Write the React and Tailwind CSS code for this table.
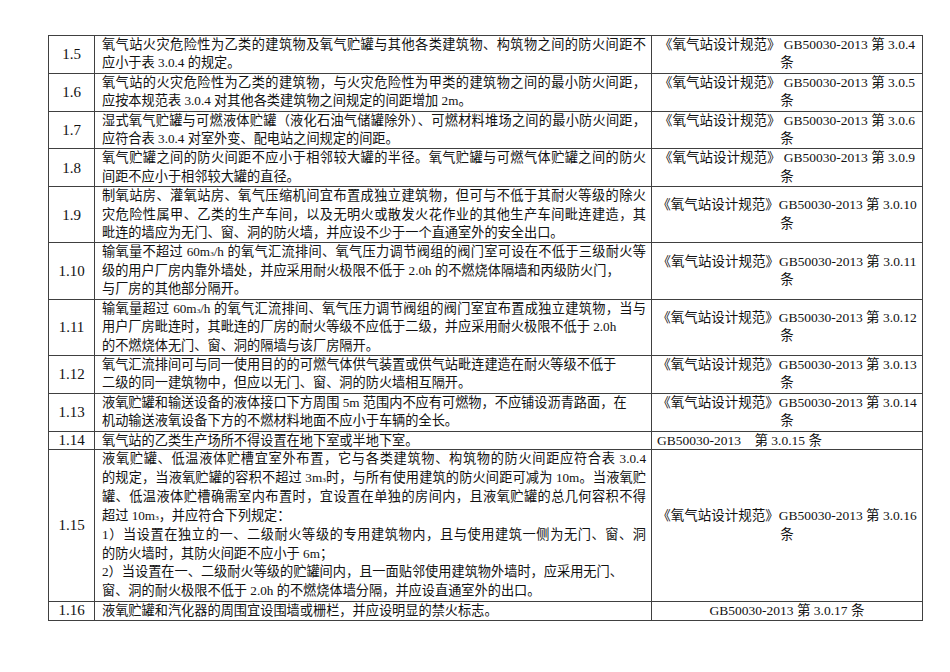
import React from 'react';

// each line: [text, justify]
const rows = [
  {
    n: '1.5',
    lines: [
      ['氧气站火灾危险性为乙类的建筑物及氧气贮罐与其他各类建筑物、构筑物之间的防火间距不', true],
      ['应小于表 3.0.4 的规定。', false],
    ],
    ref: ['《氧气站设计规范》 GB50030-2013 第 3.0.4', '条'],
  },
  {
    n: '1.6',
    lines: [
      ['氧气站的火灾危险性为乙类的建筑物，与火灾危险性为甲类的建筑物之间的最小防火间距，', true],
      ['应按本规范表 3.0.4 对其他各类建筑物之间规定的间距增加 2m。', false],
    ],
    ref: ['《氧气站设计规范》 GB50030-2013 第 3.0.5', '条'],
  },
  {
    n: '1.7',
    lines: [
      ['湿式氧气贮罐与可燃液体贮罐（液化石油气储罐除外）、可燃材料堆场之间的最小防火间距，', true],
      ['应符合表 3.0.4 对室外变、配电站之间规定的间距。', false],
    ],
    ref: ['《氧气站设计规范》 GB50030-2013 第 3.0.6', '条'],
  },
  {
    n: '1.8',
    lines: [
      ['氧气贮罐之间的防火间距不应小于相邻较大罐的半径。氧气贮罐与可燃气体贮罐之间的防火', true],
      ['间距不应小于相邻较大罐的直径。', false],
    ],
    ref: ['《氧气站设计规范》 GB50030-2013 第 3.0.9', '条'],
  },
  {
    n: '1.9',
    lines: [
      ['制氧站房、灌氧站房、氧气压缩机间宜布置成独立建筑物，但可与不低于其耐火等级的除火', true],
      ['灾危险性属甲、乙类的生产车间，以及无明火或散发火花作业的其他生产车间毗连建造，其', true],
      ['毗连的墙应为无门、窗、洞的防火墙，并应设不少于一个直通室外的安全出口。', false],
    ],
    ref: ['《氧气站设计规范》GB50030-2013 第 3.0.10', '条'],
  },
  {
    n: '1.10',
    lines: [
      ['输氧量不超过 60m³/h 的氧气汇流排间、氧气压力调节阀组的阀门室可设在不低于三级耐火等', true],
      ['级的用户厂房内靠外墙处，并应采用耐火极限不低于 2.0h 的不燃烧体隔墙和丙级防火门，', false],
      ['与厂房的其他部分隔开。', false],
    ],
    ref: ['《氧气站设计规范》GB50030-2013 第 3.0.11', '条'],
  },
  {
    n: '1.11',
    lines: [
      ['输氧量超过 60m³/h 的氧气汇流排间、氧气压力调节阀组的阀门室宜布置成独立建筑物，当与', true],
      ['用户厂房毗连时，其毗连的厂房的耐火等级不应低于二级，并应采用耐火极限不低于 2.0h', false],
      ['的不燃烧体无门、窗、洞的隔墙与该厂房隔开。', false],
    ],
    ref: ['《氧气站设计规范》GB50030-2013 第 3.0.12', '条'],
  },
  {
    n: '1.12',
    lines: [
      ['氧气汇流排间可与同一使用目的的可燃气体供气装置或供气站毗连建造在耐火等级不低于', false],
      ['二级的同一建筑物中，但应以无门、窗、洞的防火墙相互隔开。', false],
    ],
    ref: ['《氧气站设计规范》GB50030-2013 第 3.0.13', '条'],
  },
  {
    n: '1.13',
    lines: [
      ['液氧贮罐和输送设备的液体接口下方周围 5m 范围内不应有可燃物，不应铺设沥青路面，在', false],
      ['机动输送液氧设备下方的不燃材料地面不应小于车辆的全长。', false],
    ],
    ref: ['《氧气站设计规范》GB50030-2013 第 3.0.14', '条'],
  },
  {
    n: '1.14',
    lines: [['氧气站的乙类生产场所不得设置在地下室或半地下室。', false]],
    ref: ['GB50030-2013\u3000第 3.0.15 条'],
    refLeft: true,
    single: true,
  },
  {
    n: '1.15',
    lines: [
      ['液氧贮罐、低温液体贮槽宜室外布置，它与各类建筑物、构筑物的防火间距应符合表 3.0.4', true],
      ['的规定，当液氧贮罐的容积不超过 3m³时，与所有使用建筑的防火间距可减为 10m。当液氧贮', true],
      ['罐、低温液体贮槽确需室内布置时，宜设置在单独的房间内，且液氧贮罐的总几何容积不得', true],
      ['超过 10m³，并应符合下列规定：', false],
      ['1）当设置在独立的一、二级耐火等级的专用建筑物内，且与使用建筑一侧为无门、窗、洞', true],
      ['的防火墙时，其防火间距不应小于 6m；', false],
      ['2）当设置在一、二级耐火等级的贮罐间内，且一面贴邻使用建筑物外墙时，应采用无门、', false],
      ['窗、洞的耐火极限不低于 2.0h 的不燃烧体墙分隔，并应设直通室外的出口。', false],
    ],
    ref: ['《氧气站设计规范》GB50030-2013 第 3.0.16', '条'],
    tall: true,
  },
  {
    n: '1.16',
    lines: [['液氧贮罐和汽化器的周围宜设围墙或栅栏，并应设明显的禁火标志。', false]],
    ref: ['GB50030-2013 第 3.0.17 条'],
    single: true,
  },
];

// cubic-metre mark: a tiny 3 that must not grow the line box
const renderText = (s) =>
  s.split('³').map((part, i) => (
    <React.Fragment key={i}>
      {i > 0 && <span className="text-[7px] leading-[0]">3</span>}
      {part}
    </React.Fragment>
  ));

const App = () => {
  return (
    <div className="min-h-[672px] bg-white pt-[35px] pl-[48px] font-['Liberation_Serif','Noto_Sans_CJK_SC',serif] text-[13.2px] text-[#111]">
      <table className="w-[874px] table-fixed border-collapse">
        <colgroup>
          <col className="w-[46px]" />
          <col className="w-[557px]" />
          <col className="w-[271px]" />
        </colgroup>
        <tbody>
          {rows.map((row) => {
            const lh = row.tall ? 'leading-[18.9px]' : row.single ? 'leading-[17.5px]' : 'leading-[18.4px]';
            return (
              <tr key={row.n}>
                <td className={`border border-[#404040] p-0 text-center align-middle text-[15px] ${lh}`}>{row.n}</td>
                <td className={`border border-[#404040] pl-[7px] pr-[5px] py-0 align-top ${lh}`}>
                  {row.lines.map(([text, justify], i) => (
                    <div
                      key={i}
                      className={justify ? 'text-justify [text-align-last:justify]' : 'text-left'}
                    >
                      {renderText(text)}
                    </div>
                  ))}
                </td>
                <td
                  className={`border border-[#404040] py-0 align-middle text-[13.5px] ${lh} ${
                    row.refLeft ? 'pl-[5px] text-left' : 'px-1 text-center'
                  }`}
                >
                  {row.ref.map((t, i) => (
                    <div key={i} className="whitespace-pre">{t}</div>
                  ))}
                </td>
              </tr>
            );
          })}
        </tbody>
      </table>
    </div>
  );
};

export default App;
